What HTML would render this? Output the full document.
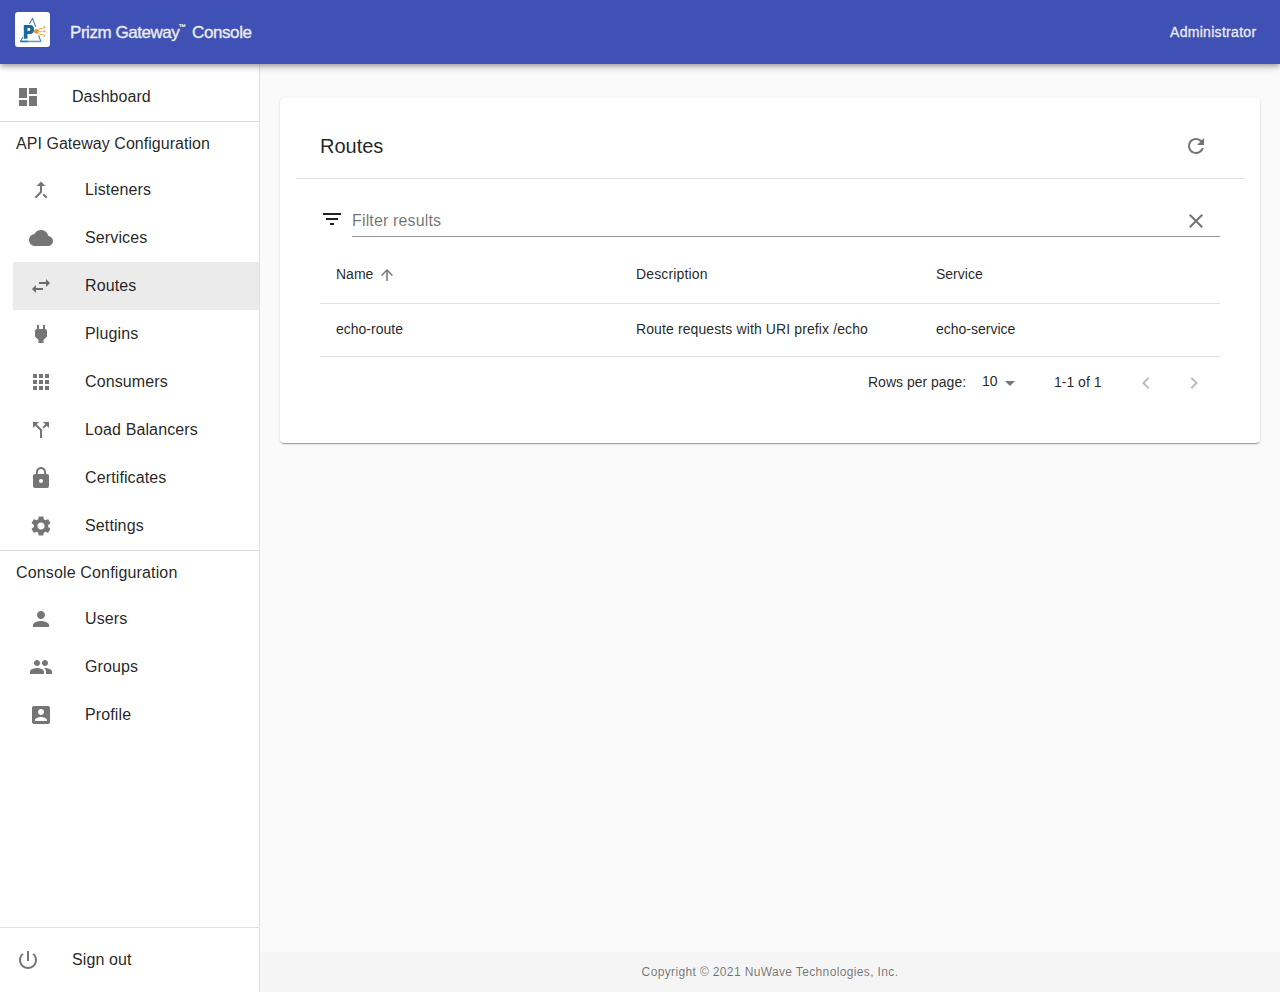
<!DOCTYPE html>
<html><head><meta charset="utf-8">
<style>
*{box-sizing:border-box;margin:0;padding:0}
html,body{width:1280px;height:992px;overflow:hidden;background:#fafafa;font-family:"Liberation Sans",sans-serif;color:rgba(0,0,0,0.87)}
svg{display:block}
.a{position:absolute;white-space:nowrap}
#bar{position:absolute;left:0;top:0;width:1280px;height:64px;background:#3f51b5;z-index:10;box-shadow:0 2px 4px -1px rgba(0,0,0,0.2),0 4px 5px 0 rgba(0,0,0,0.14),0 1px 10px 0 rgba(0,0,0,0.12)}
#logo{position:absolute;left:15px;top:12px;width:35px;height:35px;background:#fff;border-radius:3px}
#drawer{position:absolute;left:0;top:64px;width:260px;height:928px;background:#fff;border-right:1px solid rgba(0,0,0,0.12)}
.hr{position:absolute;left:0;width:259px;height:1px;background:rgba(0,0,0,0.12)}
.ic{position:absolute;width:24px;height:24px;fill:rgba(0,0,0,0.54)}
.t16{position:absolute;white-space:nowrap;font-size:16px;line-height:24px;letter-spacing:0.12px}
.t14{position:absolute;white-space:nowrap;font-size:14px;line-height:20px}
#card{position:absolute;left:280px;top:98px;width:980px;height:345px;background:#fff;border-radius:4px;box-shadow:0 2px 1px -1px rgba(0,0,0,0.2),0 1px 1px 0 rgba(0,0,0,0.14),0 1px 3px 0 rgba(0,0,0,0.12)}
#footer{position:absolute;left:260px;top:952px;width:1020px;height:40px;background:#f5f5f5}
</style></head><body>
<div id="drawer"></div>
<div id="card"></div>
<div id="footer"></div>

<div id="bar">
  <div id="logo"><svg width="35" height="35" viewBox="0 0 35 35" style="position:absolute;left:0;top:0">
<g stroke="#3179a8" stroke-width="1.05" fill="none" stroke-linecap="butt">
<path d="M14.3 11.9 L17.5 6.6 L20.8 14.9"/>
<path d="M7.7 25.0 L5.7 29.4"/>
<path d="M23.6 23.3 L25.8 29.4"/>
</g>
<path d="M5.2 28.7 H26.3 V30.2 H5.2Z" fill="#5d9bc0"/>
<path d="M5.2 28.7 H13 V30.2 H5.2Z" fill="#2f78a6"/>
<path d="M8.8 13.0 H15.2 C17.6 13.0 19.1 14.7 19.1 17.4 C19.1 20.1 17.6 21.9 15.2 21.9 H12.5 V26.8 H8.8Z M12.5 16.1 V18.9 H14.1 C14.8 18.9 15.3 18.4 15.3 17.5 C15.3 16.6 14.8 16.1 14.1 16.1Z" fill="#176aa0" fill-rule="evenodd"/>
<circle cx="21.4" cy="19.4" r="2.4" fill="#f39325"/>
<g stroke="#f5a04a" stroke-width="0.7" fill="none">
<path d="M22 19.4 H29.5"/>
<path d="M22.5 18.2 L25 16.6 H29"/>
<path d="M22.5 20.6 L25 22.4 H29"/>
</g>
<g fill="#f39325">
<circle cx="29.5" cy="19.4" r="0.9"/>
<circle cx="29.3" cy="15.2" r="0.9"/>
<circle cx="29.3" cy="23.8" r="0.9"/>
<circle cx="25.4" cy="16.4" r="0.6"/>
<circle cx="25.4" cy="22.5" r="0.6"/>
</g>
</svg></div>
  <div class="a" style="left:70px;top:21px;font-size:17px;line-height:24px;color:#ececf0;letter-spacing:-0.45px;-webkit-text-stroke:0.35px #ececf0">Prizm Gateway</div>
  <div class="a" style="left:178.5px;top:22px;font-size:7px;line-height:9px;color:#ececec;-webkit-text-stroke:0.25px #ececec">™</div>
  <div class="a" style="left:192px;top:21px;font-size:17px;line-height:24px;color:#ececf0;letter-spacing:-0.4px;-webkit-text-stroke:0.35px #ececf0">Console</div>
  <div class="a" style="left:1170px;top:22px;font-size:14px;line-height:20px;color:#ececf0;letter-spacing:0.3px;-webkit-text-stroke:0.3px #ececf0">Administrator</div>
</div>

<!-- sidebar -->
<svg class="ic" style="left:16px;top:85px" viewBox="0 0 24 24"><path d="M3 13h8V3H3v10zm0 8h8v-6H3v6zm10 0h8V11h-8v10zm0-18v6h8V3h-8z"/></svg>
<div class="t16" style="left:72px;top:85px;letter-spacing:0.06px">Dashboard</div>
<div class="hr" style="top:121px"></div>
<div class="t16" style="left:16px;top:132px;letter-spacing:0.04px">API Gateway Configuration</div>

<svg class="ic" style="left:29px;top:178px" viewBox="0 0 24 24"><path d="M17 20.41L18.41 19 15 15.590 13.59 17 17 20.41zM7.5 8H11v5.59L5.59 19 7 20.41l6-6V8h3.5L12 3.5 7.5 8z"/></svg>
<div class="t16" style="left:85px;top:178px">Listeners</div>

<svg class="ic" style="left:29px;top:226px" viewBox="0 0 24 24"><path d="M19.35 10.04C18.67 6.59 15.64 4 12 4 9.110 4 6.600 5.640 5.350 8.040 2.340 8.360 0 10.910 0 14c0 3.310 2.690 6 6 6h13c2.760 0 5-2.240 5-5 0-2.640-2.050-4.780-4.650-4.960z"/></svg>
<div class="t16" style="left:85px;top:226px">Services</div>

<div style="position:absolute;left:13px;top:262px;width:246px;height:48px;background:rgba(0,0,0,0.08)"></div>
<svg class="ic" style="left:29px;top:274px" viewBox="0 0 24 24"><path d="M6.99 11L3 15l3.99 4v-3H14v-2H6.99v-3zM21 9l-3.99-4v3H10v2h7.01v3L21 9z"/></svg>
<div class="t16" style="left:85px;top:274px">Routes</div>

<svg class="ic" style="left:29px;top:322px" viewBox="0 0 24 24"><path d="M16.01 7L16 3h-2v4h-4V3H8v4h-.01C7 6.99 6 7.990 6 8.990v5.490L9.500 18v3h5v-3l3.500-3.510v-5.500c0-1-1-2-1.990-1.990z"/></svg>
<div class="t16" style="left:85px;top:322px">Plugins</div>

<svg class="ic" style="left:29px;top:370px" viewBox="0 0 24 24"><path d="M4 8h4V4H4v4zm6 12h4v-4h-4v4zm-6 0h4v-4H4v4zm0-6h4v-4H4v4zm6 0h4v-4h-4v4zm6-10v4h4V4h-4zm-6 4h4V4h-4v4zm6 6h4v-4h-4v4zm0 6h4v-4h-4v4z"/></svg>
<div class="t16" style="left:85px;top:370px">Consumers</div>

<svg class="ic" style="left:29px;top:418px" viewBox="0 0 24 24"><path d="M14 4l2.29 2.29-2.88 2.88 1.42 1.42 2.88-2.88L20 10V4zm-4 0H4v6l2.29-2.29 4.71 4.7V20h2v-8.41l-5.29-5.3z"/></svg>
<div class="t16" style="left:85px;top:418px">Load Balancers</div>

<svg class="ic" style="left:29px;top:466px" viewBox="0 0 24 24"><path d="M18 8h-1V6c0-2.76-2.24-5-5-5S7 3.24 7 6v2H6c-1.1 0-2 .9-2 2v10c0 1.1.9 2 2 2h12c1.1 0 2-.9 2-2V10c0-1.1-.9-2-2-2zm-6 9c-1.1 0-2-.9-2-2s.9-2 2-2 2 .9 2 2-.9 2-2 2zm3.1-9H8.9V6c0-1.71 1.39-3.1 3.1-3.1 1.71 0 3.1 1.39 3.1 3.1v2z"/></svg>
<div class="t16" style="left:85px;top:466px">Certificates</div>

<svg class="ic" style="left:29px;top:514px" viewBox="0 0 24 24"><path d="M19.14 12.94c.04-.3.06-.61.06-.94 0-.32-.02-.64-.07-.94l2.03-1.58c.18-.14.23-.41.12-.61l-1.92-3.32c-.12-.22-.37-.29-.59-.22l-2.39.96c-.5-.38-1.03-.7-1.62-.94l-.36-2.54c-.04-.24-.24-.41-.48-.41h-3.84c-.24 0-.43.17-.47.41l-.36 2.54c-.59.24-1.13.57-1.62.94l-2.39-.96c-.22-.08-.47 0-.59.22L2.74 8.87c-.12.21-.08.47.12.61l2.03 1.58c-.05.3-.09.63-.09.94s.02.64.07.94l-2.03 1.58c-.18.14-.23.41-.12.61l1.92 3.32c.12.22.37.29.59.22l2.39-.96c.5.38 1.030.7 1.620.94l.36 2.54c.05.24.24.41.48.41h3.84c.24 0 .44-.17.47-.41l.36-2.54c.59-.24 1.13-.56 1.62-.94l2.39.96c.22.08.47 0 .59-.22l1.92-3.32c.12-.22.07-.47-.12-.61l-2.01-1.58zM12 15.6c-1.98 0-3.6-1.62-3.6-3.6s1.62-3.6 3.6-3.6 3.6 1.62 3.6 3.6-1.62 3.6-3.6 3.6z"/></svg>
<div class="t16" style="left:85px;top:514px">Settings</div>

<div class="hr" style="top:550px"></div>
<div class="t16" style="left:16px;top:561px;letter-spacing:0.15px">Console Configuration</div>

<svg class="ic" style="left:29px;top:607px" viewBox="0 0 24 24"><path d="M12 12c2.21 0 4-1.79 4-4s-1.79-4-4-4-4 1.79-4 4 1.79 4 4 4zm0 2c-2.67 0-8 1.34-8 4v2h16v-2c0-2.66-5.33-4-8-4z"/></svg>
<div class="t16" style="left:85px;top:607px">Users</div>

<svg class="ic" style="left:29px;top:655px" viewBox="0 0 24 24"><path d="M16 11c1.66 0 2.99-1.34 2.99-3S17.66 5 16 5c-1.66 0-3 1.34-3 3s1.34 3 3 3zm-8 0c1.66 0 2.99-1.34 2.99-3S9.66 5 8 5C6.34 5 5 6.34 5 8s1.34 3 3 3zm0 2c-2.33 0-7 1.17-7 3.5V19h14v-2.5c0-2.33-4.67-3.5-7-3.5zm8 0c-.29 0-.62.02-.97.05 1.16.84 1.97 1.97 1.97 3.45V19h6v-2.5c0-2.33-4.67-3.5-7-3.5z"/></svg>
<div class="t16" style="left:85px;top:655px">Groups</div>

<svg class="ic" style="left:29px;top:703px" viewBox="0 0 24 24"><path d="M3 5v14c0 1.1.89 2 2 2h14c1.1 0 2-.9 2-2V5c0-1.1-.9-2-2-2H5c-1.11 0-2 .9-2 2zm12 4c0 1.66-1.34 3-3 3s-3-1.34-3-3 1.34-3 3-3 3 1.34 3 3zm-9 8c0-2 4-3.1 6-3.1s6 1.1 6 3.1v1H6v-1z"/></svg>
<div class="t16" style="left:85px;top:703px">Profile</div>

<div class="hr" style="top:927px"></div>
<svg class="ic" style="left:16px;top:948px" viewBox="0 0 24 24"><path d="M13 3h-2v10h2V3zm4.83 2.17l-1.42 1.42C17.99 7.86 19 9.81 19 12c0 3.87-3.13 7-7 7s-7-3.13-7-7c0-2.19 1.01-4.14 2.58-5.42L6.17 5.17C4.23 6.82 3 9.26 3 12c0 4.97 4.03 9 9 9s9-4.03 9-9c0-2.74-1.230-5.180-3.170-6.830z"/></svg>
<div class="t16" style="left:72px;top:948px">Sign out</div>

<!-- card content -->
<div class="a" style="left:320px;top:130px;font-size:20px;line-height:32px">Routes</div>
<svg class="ic" style="left:1184px;top:134px" viewBox="0 0 24 24"><path d="M17.65 6.35C16.2 4.9 14.21 4 12 4c-4.42 0-7.99 3.58-7.99 8s3.57 8 7.99 8c3.73 0 6.84-2.55 7.73-6h-2.08c-.82 2.33-3.04 4-5.65 4-3.31 0-6-2.69-6-6s2.69-6 6-6c1.66 0 3.14.69 4.22 1.78L13 11h7V4l-2.35 2.35z"/></svg>
<div style="position:absolute;left:296px;top:178px;width:948px;height:1px;background:rgba(0,0,0,0.12)"></div>

<svg class="ic" style="left:320px;top:207px;fill:rgba(0,0,0,0.87)" viewBox="0 0 24 24"><path d="M10 18h4v-2h-4v2zM3 6v2h18V6H3zm3 7h12v-2H6v2z"/></svg>
<div class="t16" style="left:352px;top:209px;color:rgba(0,0,0,0.56);letter-spacing:0.15px">Filter results</div>
<svg class="ic" style="left:1184px;top:209px" viewBox="0 0 24 24"><path d="M19 6.41L17.59 5 12 10.59 6.41 5 5 6.41 10.59 12 5 17.59 6.41 19 12 13.41 17.59 19 19 17.59 13.41 12z"/></svg>
<div style="position:absolute;left:352px;top:236px;width:868px;height:1px;background:rgba(0,0,0,0.42)"></div>

<div class="a" style="left:336px;top:262px;font-size:14px;line-height:24px">Name</div>
<svg class="ic" style="left:378px;top:266px;width:18px;height:18px" viewBox="0 0 24 24"><path d="M4 12l1.41 1.41L11 7.83V20h2V7.83l5.58 5.59L20 12l-8-8-8 8z"/></svg>
<div class="a" style="left:636px;top:262px;font-size:14px;line-height:24px;letter-spacing:0.15px">Description</div>
<div class="a" style="left:936px;top:262px;font-size:14px;line-height:24px">Service</div>
<div style="position:absolute;left:320px;top:303px;width:900px;height:1px;background:rgba(224,224,224,1)"></div>

<div class="t14" style="left:336px;top:319px">echo-route</div>
<div class="t14" style="left:636px;top:319px;letter-spacing:0.11px">Route requests with URI prefix /echo</div>
<div class="t14" style="left:936px;top:319px">echo-service</div>
<div style="position:absolute;left:320px;top:356px;width:900px;height:1px;background:rgba(224,224,224,1)"></div>

<div class="t14" style="left:868px;top:372px">Rows per page:</div>
<div class="t14" style="left:982px;top:371px">10</div>
<svg class="ic" style="left:998px;top:371px" viewBox="0 0 24 24"><path d="M7 10l5 5 5-5z"/></svg>
<div class="t14" style="left:1054px;top:372px">1-1 of 1</div>
<svg class="ic" style="left:1134px;top:371px;fill:rgba(0,0,0,0.26)" viewBox="0 0 24 24"><path d="M15.41 16.59L10.83 12l4.58-4.59L14 6l-6 6 6 6 1.41-1.41z"/></svg>
<svg class="ic" style="left:1182px;top:371px;fill:rgba(0,0,0,0.26)" viewBox="0 0 24 24"><path d="M8.59 16.59L13.17 12 8.59 7.41 10 6l6 6-6 6-1.41-1.41z"/></svg>

<div class="a" style="left:260px;top:962px;width:1020px;text-align:center;font-size:12px;line-height:20px;letter-spacing:0.36px;color:rgba(0,0,0,0.54)">Copyright © 2021 NuWave Technologies, Inc.</div>
</body></html>
